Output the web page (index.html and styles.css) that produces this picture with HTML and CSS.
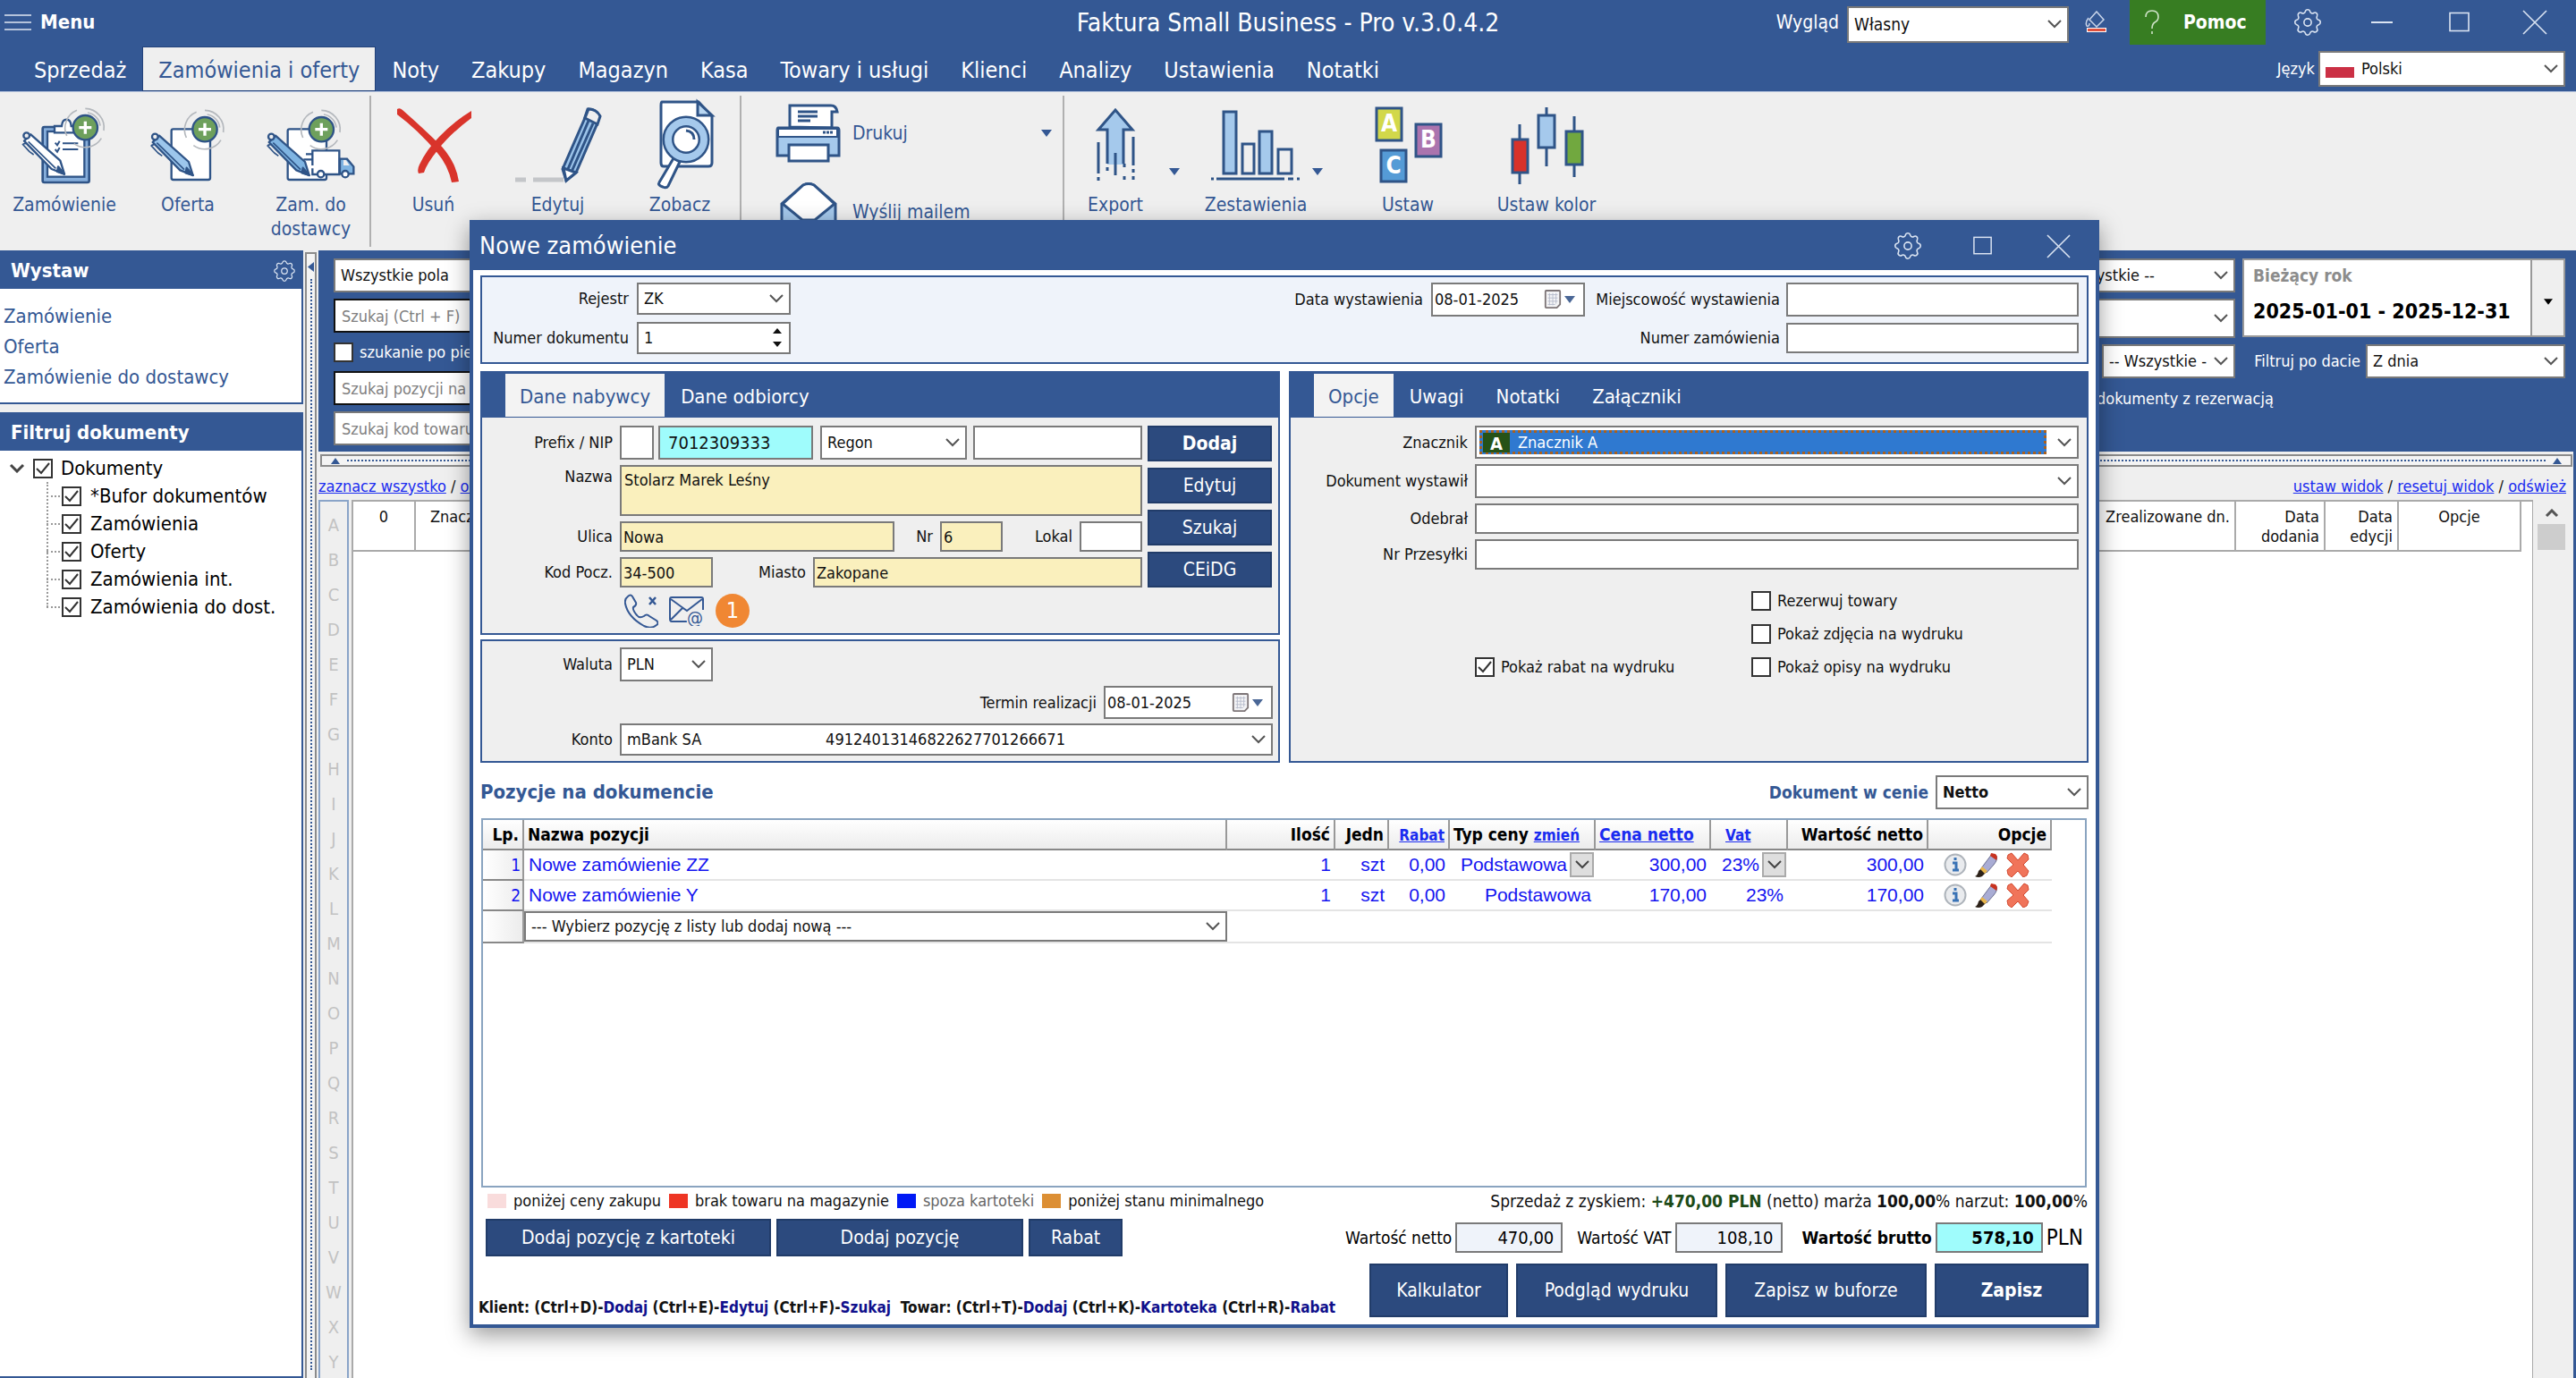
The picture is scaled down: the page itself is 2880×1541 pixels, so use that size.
FILE: index.html
```
<!DOCTYPE html>
<html lang="pl">
<head>
<meta charset="utf-8">
<meta name="viewport" content="width=device-width, initial-scale=1">
<title>Faktura Small Business</title>
<link rel="stylesheet" href="styles.css">
</head>
<body>
<svg class="defs" aria-hidden="true">
  <defs>
    <symbol id="gear" viewBox="0 0 24 24"><path fill="none" stroke="currentColor" stroke-width="1" d="M10.325 4.317c.426-1.756 2.924-1.756 3.35 0a1.724 1.724 0 002.573 1.066c1.543-.94 3.31.826 2.37 2.37a1.724 1.724 0 001.065 2.572c1.756.426 1.756 2.924 0 3.35a1.724 1.724 0 00-1.066 2.573c.94 1.543-.826 3.31-2.37 2.37a1.724 1.724 0 00-2.572 1.065c-.426 1.756-2.924 1.756-3.35 0a1.724 1.724 0 00-2.573-1.066c-1.543.94-3.31-.826-2.37-2.37a1.724 1.724 0 00-1.065-2.572c-1.756-.426-1.756-2.924 0-3.35a1.724 1.724 0 001.066-2.573c-.94-1.543.826-3.31 2.37-2.37.996.608 2.296.07 2.572-1.065z"/><circle cx="12" cy="12" r="2.6" fill="none" stroke="currentColor"/></symbol>
    <symbol id="square" viewBox="0 0 24 24"><rect x="1" y="1.500" width="21" height="20" fill="none" stroke="currentColor" stroke-width="1.600"/></symbol>
    <symbol id="cross" viewBox="0 0 28 28"><path d="M1 1 27 27M27 1 1 27" fill="none" stroke="currentColor" stroke-width="1.600"/></symbol>
    <symbol id="calendar" viewBox="0 0 22 26"><path d="M3 2h16q1 0 1 1v16l-4 4H3q-1 0-1-1V3q0-1 1-1z" fill="#f4f4f6" stroke="#7d7577" stroke-width="2"/><path d="M5 7h12M5 11h12M5 15h12M5 19h9M7 5v15M11 5v15M15 5v13" stroke="#b6bccb" stroke-width="1" fill="none"/></symbol>
    <symbol id="down" viewBox="0 0 12 8"><path d="M0 0h12L6 8z" fill="currentColor"/></symbol>
    <g id="badge">
      <path d="M-62 28A64 64 0 0 1-28-58M0-64A64 64 0 0 1 62 10M54 36A64 64 0 0 1-38 54M8-50A50 50 0 0 1 50-6" fill="none" stroke="#b4b8bd" stroke-width="5"/>
      <circle r="41" fill="#6ea05c" stroke="#2f5487" stroke-width="7"/>
      <path d="M0-21V21M-21 0H21" stroke="#fff" stroke-width="10"/>
    </g>
    <g id="pen" stroke="#2f5487" stroke-width="7" stroke-linejoin="round">
      <path d="M12 18 26 4 125 92 139 137 96 120 4 26z" fill="currentColor"/>
      <circle cx="12" cy="8" r="10" fill="#efefef"/>
      <path d="M18 28 110 118M-2 36 22 62 36 72M0 36l10-2" fill="none" stroke-width="5"/>
      <path d="m118 112 21 25-24-8z" fill="#2f5487"/>
    </g>
    <g id="row-icons">
      <circle cx="13" cy="14" r="11.500" fill="#e9ebee" stroke="#aeb4bb" stroke-width="2"/>
      <path d="M13 6v3M10 12h4v8m-4 0h7" stroke="#3a73b5" stroke-width="3" fill="none"/>
      <path d="M54 2 59 4Q61 8 56 14L48 23 42 18z" fill="#a9acd4" stroke="#6b6f90"/>
      <path d="m53 1 5 1q3 3 1 7l-7-5z" fill="#c8321f"/><path d="m42 18 5 5-4 4q-4 2-8 0 3-1 4-6z" fill="#2c2118"/><path d="m43 16 6 5-3 3-5-5z" fill="#e8b64c"/>
      <path d="m72 3 4-2 7 8 7-8 4 2 1 5-6 6 6 7-2 5-4 2-6-7-7 7-4-3-1-5 7-6-7-7z" fill="#f0745a" stroke="#d2492f" stroke-width="1"/>
    </g>
  </defs>
</svg>

<header class="topbar">
  <div class="topbar-row">
    <button class="menu-button"><svg width="30" height="18" viewBox="0 0 30 18"><path d="M0 1h30M0 9h30M0 17h30" stroke="#dfe6f2" stroke-width="1.600"/></svg>Menu</button>
    <h1>Faktura Small Business - Pro v.3.0.4.2</h1>
    <div class="window-tools">
      <label for="skin">Wygląd</label>
      <select id="skin" class="field skin"><option>Własny</option></select>
      <button class="icon-button bucket" aria-label="Kolor"><svg width="26" height="26" viewBox="0 0 26 26"><path d="m13 1 8 9-8 8-8-8zM4 8q-4 5-2 9 3 1 3-3" fill="none" stroke="#c9d5ea" stroke-width="1.500"/><path d="M2 19h22v5H2z" fill="#fff"/><path d="M3 20h20v3H3z" fill="#e0503c"/></svg></button>
      <button class="help"><svg width="18" height="28" viewBox="0 0 18 28"><path d="M2 8q0-7 7-7t7 7q0 4-4 6-3 2-3 7M9 24v3" fill="none" stroke="#cfe3c8" stroke-width="1.600"/></svg>Pomoc</button>
      <button class="icon-button gear" aria-label="Ustawienia"><svg width="38" height="38"><use href="#gear"/></svg></button>
      <button class="icon-button min" aria-label="Minimalizuj"><svg width="24" height="24"><path d="M0 12h24" stroke="currentColor" stroke-width="2"/></svg></button>
      <button class="icon-button max" aria-label="Maksymalizuj"><svg width="24" height="24"><use href="#square"/></svg></button>
      <button class="icon-button" aria-label="Zamknij"><svg width="28" height="28"><use href="#cross"/></svg></button>
    </div>
  </div>
  <div class="topbar-row">
    <nav class="tabs">
      <a href="#">Sprzedaż</a><a href="#" class="active">Zamówienia i oferty</a><a href="#">Noty</a><a href="#">Zakupy</a><a href="#">Magazyn</a><a href="#">Kasa</a><a href="#">Towary i usługi</a><a href="#">Klienci</a><a href="#">Analizy</a><a href="#">Ustawienia</a><a href="#">Notatki</a>
    </nav>
    <div class="language">
      <label for="lang">Język</label>
      <span class="flagged"><select id="lang" class="field"><option>Polski</option></select><i class="flag"></i></span>
    </div>
  </div>
</header>

<div class="ribbon">
  <div class="group">
    <button class="tool w144"><svg viewBox="80 48 270 270">
      <rect x="142" y="123" width="156" height="186" rx="6" fill="#86aedb" stroke="#2f5487" stroke-width="8"/>
      <rect x="158" y="138" width="124" height="152" fill="#fff" stroke="#2f5487" stroke-width="7"/>
      <path d="M182 142v-22h24q2-22 16-22t16 22h14v22z" fill="#fff" stroke="#2f5487" stroke-width="7"/>
      <path d="m184 176 7 8 8-14m10 8h52M184 198l7 8 8-14m10 6h52" fill="none" stroke="#2f5487" stroke-width="6"/>
      <use href="#pen" x="76" y="144" color="#fff"/>
      <use href="#badge" x="285" y="125"/></svg>Zamówienie</button>
    <button class="tool w132"><svg viewBox="495 48 270 270">
      <rect x="575" y="130" width="130" height="170" rx="6" fill="#fff" stroke="#2f5487" stroke-width="7"/>
      <use href="#pen" x="508" y="148" color="#9cc6ec"/><use href="#badge" x="687" y="131"/></svg>Oferta</button>
    <button class="tool w137"><svg viewBox="909 48 270 270">
      <rect x="965" y="130" width="130" height="170" rx="6" fill="#fff" stroke="#2f5487" stroke-width="7"/>
      <use href="#pen" x="898" y="148" color="#7fb4e2"/>
      <path d="M1026 214h24M1018 232h32M1048 262v20h90v-80h-90v50" fill="#fff" stroke="#2f5487" stroke-width="7"/>
      <path d="M1140 230h24l22 26v24h-46z" fill="#7fb4e2" stroke="#2f5487" stroke-width="7"/><path d="M1152 234v18h20l-12-18z" fill="#efefef"/>
      <circle cx="1076" cy="281" r="11" fill="#fff" stroke="#2f5487" stroke-width="7"/><circle cx="1158" cy="281" r="11" fill="#fff" stroke="#2f5487" stroke-width="7"/>
      <use href="#badge" x="1078" y="131"/></svg>Zam. do dostawcy</button>
  </div>
  <div class="group">
    <button class="tool w139"><svg viewBox="439 116 90 90"><path d="M443 121q3-2 6 1 25 22 44 41 16 18 19 39l-8 1q-4-19-16-33-22-26-45-43z" fill="#d9342b"/><path d="M526 123v8q-24 18-37 35-13 16-16 26l-6 1q-2-4 1-10 8-17 22-31 16-17 36-29z" fill="#d9342b"/></svg>Usuń</button>
    <button class="tool w139"><svg viewBox="578 116 90 90"><path d="M575 200h12M595 200h34" stroke="#c4c6c9" stroke-width="5"/><path d="M656 121q8-1 13 7l-3 11-23 53-11 9-4-13 24-55z" fill="#9cc4ea" stroke="#2f5487" stroke-width="3"/><path d="m653 131 14 7 3-9q-4-8-13-8z" fill="#efefef" stroke="#2f5487" stroke-width="3"/><path d="m629 187 14 5-11 9z" fill="#fff" stroke="#2f5487" stroke-width="3"/><path d="m657 134-23 54M662 137l-24 54" stroke="#2f5487" stroke-width="3"/></svg>Edytuj</button>
    <button class="tool w134"><svg viewBox="715 116 90 90"><path d="M740 113h41l15 16v52q0 4-4 4h-50q-3 0-3-4v-64q0-4 1-4z" fill="#fff" stroke="#2f5487" stroke-width="3"/><path d="M780 113v15h16z" fill="#b9d7f2" stroke="#2f5487" stroke-width="3"/><path d="m753 176 7 4-13 27q-2 3-6 1-6-2-4-5z" fill="#fff" stroke="#2f5487" stroke-width="3"/><circle cx="767" cy="155" r="20" fill="#fff" stroke="#2f5487" stroke-width="13"/><circle cx="767" cy="155" r="20" fill="none" stroke="#a5c9ec" stroke-width="8"/><path d="M767 145q9 1 9 10" fill="none" stroke="#2f5487" stroke-width="3"/></svg>Zobacz</button>
  </div>
  <div class="group wide">
    <button class="line-tool"><svg width="74" height="66" viewBox="865 116 74 66"><path d="M881 142v-24h46q6 0 7 7h-6v18z" fill="#fff" stroke="#2f5487" stroke-width="3"/><path d="M890 125h22M890 130h22M890 135h14" stroke="#2f5487" stroke-width="3"/><path d="M868 143h66q2 0 2 3v28h-69v-28q0-3 1-3z" fill="#a5c9ec" stroke="#2f5487" stroke-width="3"/><path d="M868 144h66v9h-66z" fill="#fff" stroke="#2f5487" stroke-width="2"/><path d="M918 148h12" stroke="#2f5487" stroke-width="3" stroke-dasharray="3 1"/><path d="M880 162h44v18h-44z" fill="#fff" stroke="#2f5487" stroke-width="3"/></svg>Drukuj<svg class="caret" width="12" height="8"><use href="#down"/></svg></button>
    <button class="line-tool"><svg width="74" height="66" viewBox="864 204 74 66"><path d="M871 228 895 207q6-3 12 0l24 21v40h-60z" fill="#a5c9ec" stroke="#2f5487" stroke-width="3"/><path d="M872 228 895 207q6-3 12 0l23 21-22 18h-14z" fill="#fff" stroke="#2f5487" stroke-width="3"/></svg>Wyślij mailem</button>
  </div>
  <div class="group last">
    <button class="tool w112"><svg viewBox="1201 116 90 90"><path d="m1246 122 19 21h-10v40h-18v-40h-10z" fill="#a5c9ec"/><path d="M1237 182v-38h-10l19-22 19 22h-10v38" fill="none" stroke="#2f5487" stroke-width="3"/><path d="M1227 158v35M1246 170v25M1266 152v32" stroke="#2f5487" stroke-width="3"/><path d="M1227 197v4M1237 186v5M1256 196v5M1256 182v8M1266 188v14" stroke="#2f5487" stroke-width="3" stroke-dasharray="4 4"/></svg>Export</button>
    <button class="drop" aria-label="Rozwiń"><svg width="12" height="8"><use href="#down"/></svg></button>
    <button class="tool w118"><svg viewBox="1358 116 90 90"><g fill="#efefef" stroke="#2f5487" stroke-width="3"><path d="M1367 124h14v69h-14zM1407 146h14v47h-14z" fill="#a5c9ec"/><path d="M1388 160h13v33h-13zM1428 166h15v27h-15z"/><path d="M1353 199h3M1359 199h76M1439 199h6M1449 199h3" /></g></svg>Zestawienia</button>
    <button class="drop" aria-label="Rozwiń"><svg width="12" height="8"><use href="#down"/></svg></button>
    <button class="tool w138"><svg viewBox="1528 116 90 90"><g stroke="#2f5487" stroke-width="3"><path d="M1538 120h28v36h-28z" fill="#d2d84a"/><path d="M1582 138h28v36h-28z" fill="#ab74ae"/><path d="M1543 167h28v35h-28z" fill="#559bd6"/></g><g class="letters"><text x="1552" y="146">A</text><text x="1596" y="164">B</text><text x="1557" y="193">C</text></g></svg>Ustaw</button>
    <button class="tool w172"><svg viewBox="1683 116 90 90"><path d="M1698 138v67M1728 119v66M1759 129v68" stroke="#2f5487" stroke-width="3"/><g stroke="#2f5487" stroke-width="3"><path d="M1690 155h17v37h-17z" fill="#d8322b"/><path d="M1719 128h18v36h-18z" fill="#a5c9ec"/><path d="M1750 146h18v37h-18z" fill="#71a83f"/></g></svg>Ustaw kolor</button>
  </div>
</div>

<div class="workspace">
  <aside class="sidebar">
    <section class="side-box">
      <div class="side-head"><h2>Wystaw</h2><button class="icon-button" aria-label="Ustawienia"><svg width="30" height="30"><use href="#gear"/></svg></button></div>
      <ul class="side-links"><li><a href="#">Zamówienie</a></li><li><a href="#">Oferta</a></li><li><a href="#">Zamówienie do dostawcy</a></li></ul>
    </section>
    <section class="side-box grow">
      <div class="side-head"><h2>Filtruj dokumenty</h2></div>
      <div class="tree">
        <div class="node"><svg width="18" height="11" viewBox="0 0 18 11"><path d="m2 2 7 7 7-7" fill="none" stroke="#444" stroke-width="3"/></svg><input type="checkbox" id="t0" checked><label for="t0">Dokumenty</label></div>
        <ul>
          <li class="node"><input type="checkbox" id="t1" checked><label for="t1">*Bufor dokumentów</label></li>
          <li class="node"><input type="checkbox" id="t2" checked><label for="t2">Zamówienia</label></li>
          <li class="node"><input type="checkbox" id="t3" checked><label for="t3">Oferty</label></li>
          <li class="node"><input type="checkbox" id="t4" checked><label for="t4">Zamówienia int.</label></li>
          <li class="node"><input type="checkbox" id="t5" checked><label for="t5">Zamówienia do dost.</label></li>
        </ul>
      </div>
    </section>
  </aside>
  <div class="splitter-v"><svg width="7" height="11" viewBox="0 0 7 11"><path d="M7 0v11L0 5.500z" fill="#345894"/></svg></div>
  <main class="main">
    <div class="search">
      <div class="search-left">
        <select class="field h38" aria-label="Pole"><option>Wszystkie pola</option></select>
        <input class="field h38 dark" placeholder="Szukaj (Ctrl + F)" aria-label="Szukaj">
        <span class="check"><input type="checkbox" id="s1"><label for="s1">szukanie po pierwszych</label></span>
        <input class="field h38 dark" placeholder="Szukaj pozycji na dokumencie" aria-label="Szukaj pozycji">
        <input class="field h38" placeholder="Szukaj kod towaru" aria-label="Szukaj kod">
      </div>
      <div class="search-mid">
        <select class="field h38" aria-label="Filtr 1"><option>-- Wszystkie --</option></select>
        <select class="field h44" aria-label="Filtr 2"><option></option></select>
        <select class="field h38 short" aria-label="Filtr 3"><option>-- Wszystkie --</option></select>
        <span class="reservation">dokumenty z rezerwacją</span>
      </div>
      <div class="search-right">
        <div class="period"><div><b class="muted">Bieżący rok</b><b>2025-01-01 - 2025-12-31</b></div><button aria-label="Okres"><svg width="10" height="7"><use href="#down"/></svg></button></div>
        <div class="by-date"><label for="bydate">Filtruj po dacie</label><select id="bydate" class="field h38"><option>Z dnia</option></select></div>
      </div>
    </div>
    <div class="splitter-h"><svg width="10" height="7" viewBox="0 0 10 7"><path d="M0 7h10L5 0z" fill="#345894"/></svg><i></i><svg width="10" height="7" viewBox="0 0 10 7"><path d="M0 7h10L5 0z" fill="#345894"/></svg></div>
    <div class="link-row"><span><a href="#">zaznacz wszystko</a> / <a href="#">odznacz</a></span><span><a href="#">ustaw widok</a> / <a href="#">resetuj widok</a> / <a href="#">odśwież</a></span></div>
    <div class="documents">
      <div class="letters-bar"><span>A</span><span>B</span><span>C</span><span>D</span><span>E</span><span>F</span><span>G</span><span>H</span><span>I</span><span>J</span><span>K</span><span>L</span><span>M</span><span>N</span><span>O</span><span>P</span><span>Q</span><span>R</span><span>S</span><span>T</span><span>U</span><span>V</span><span>W</span><span>X</span><span>Y</span></div>
      <div class="doc-list">
        <table class="doc-table">
          <colgroup><col class="d1"><col><col class="d3"><col class="d4"><col class="d5"><col class="d6"></colgroup>
          <tr><th class="c">0</th><th class="l">Znacznik</th><th>Zrealizowane dn.</th><th>Data dodania</th><th>Data edycji</th><th class="c">Opcje</th></tr>
        </table>
      </div>
      <div class="scrollbar"><svg width="16" height="10" viewBox="0 0 16 10"><path d="m2 8 6-6 6 6" fill="none" stroke="#555" stroke-width="3"/></svg><i></i></div>
    </div>
  </main>
</div>

<div class="dialog" role="dialog" aria-labelledby="dlg">
  <div class="dialog-head"><h2 id="dlg">Nowe zamówienie</h2>
    <button class="icon-button" aria-label="Ustawienia"><svg width="38" height="38"><use href="#gear"/></svg></button>
    <button class="icon-button" aria-label="Maksymalizuj"><svg width="22" height="22"><use href="#square"/></svg></button>
    <button class="icon-button" aria-label="Zamknij"><svg width="27" height="27"><use href="#cross"/></svg></button>
  </div>
  <div class="dialog-body">
    <section class="panel heading">
      <div class="pair"><label for="rej">Rejestr</label><select id="rej" class="field h36"><option>ZK</option></select>
        <label for="num">Numer dokumentu</label><span class="spin field"><input id="num" value="1"><svg width="10" height="22" viewBox="0 0 10 22"><path d="M5 0 10 6H0zM5 21 0 15h10z" fill="#111"/></svg></span></div>
      <div class="heading-right">
        <div class="date-row"><label for="dat">Data wystawienia</label><span class="date field"><input id="dat" value="08-01-2025"><svg width="20" height="24"><use href="#calendar"/></svg><svg width="12" height="8"><use href="#down"/></svg></span></div>
        <div class="pair city"><label for="city">Miejscowość wystawienia</label><input id="city" class="field h38"><label for="ordn">Numer zamówienia</label><input id="ordn" class="field h34"></div>
      </div>
    </section>

    <div class="columns">
      <div class="left-col">
        <section class="panel tabbed">
          <div class="subtabs"><button class="active">Dane nabywcy</button><button>Dane odbiorcy</button></div>
          <div class="buyer">
            <div class="buyer-fields">
              <div class="row"><label for="pfx">Prefix / NIP</label><input id="pfx" class="field h38 w38"><input class="field h38 nip" value="7012309333" aria-label="NIP"><select class="field h38 regon" aria-label="Rodzaj numeru"><option>Regon</option></select><input class="field h38 fill" aria-label="Regon"></div>
              <div class="row top"><label for="nm">Nazwa</label><textarea id="nm" class="field yellow fill">Stolarz Marek Leśny</textarea></div>
              <div class="row"><label for="st">Ulica</label><input id="st" class="field h34 yellow fill" value="Nowa"><label for="nr" class="w51">Nr</label><input id="nr" class="field h34 yellow w70" value="6"><label for="lok" class="w86">Lokal</label><input id="lok" class="field h34 w70"></div>
              <div class="row"><label for="zip">Kod Pocz.</label><input id="zip" class="field h34 yellow w104" value="34-500"><label for="town" class="w112">Miasto</label><input id="town" class="field h34 yellow fill" value="Zakopane"></div>
              <div class="contact">
                <button class="icon-button" aria-label="Telefon"><svg width="38" height="38" viewBox="0 0 38 38"><g fill="none" stroke="#345894" stroke-width="2"><path d="M4 3q3-3 5 0l4 7q1 3-3 5-1 3 4 9 3 4 8 1 3-3 6 0l8 5q3 3 0 5-6 5-14 1Q4 26 1 11q-1-5 3-8z"/><path d="m28 4 7 8m0-8-7 8" stroke-width="2.500"/></g></svg></button>
                <button class="icon-button" aria-label="E-mail"><svg width="40" height="34" viewBox="0 0 40 34"><g fill="none" stroke="#345894" stroke-width="2"><path d="M38 16V4q0-2-2-2H3Q1 2 1 4v22q0 3 2 3h17"/><path d="m2 4 18 13L37 4M2 27l13-13"/></g><text x="20" y="32" class="at">@</text></svg></button>
                <span class="count">1</span>
              </div>
            </div>
            <div class="buyer-actions"><button class="btn strong">Dodaj</button><button class="btn">Edytuj</button><button class="btn">Szukaj</button><button class="btn">CEiDG</button></div>
          </div>
        </section>
        <section class="panel payment">
          <div class="row"><label for="cur">Waluta</label><select id="cur" class="field h38 w104"><option>PLN</option></select></div>
          <div class="row end"><label for="term" class="auto">Termin realizacji</label><span class="date field wide-date"><input id="term" value="08-01-2025"><svg width="20" height="24"><use href="#calendar"/></svg><svg width="12" height="8"><use href="#down"/></svg></span></div>
          <div class="row"><label for="acc">Konto</label><select id="acc" class="field h36 fill"><option>mBank SA&nbsp;&nbsp;&nbsp;&nbsp;&nbsp;&nbsp;&nbsp;&nbsp;&nbsp;&nbsp;&nbsp;&nbsp;&nbsp;&nbsp;&nbsp;&nbsp;&nbsp;&nbsp;&nbsp;&nbsp;&nbsp;&nbsp;&nbsp;&nbsp;&nbsp;&nbsp;&nbsp;49124013146822627701266671</option></select></div>
        </section>
      </div>

      <section class="panel tabbed">
        <div class="subtabs"><button class="active">Opcje</button><button>Uwagi</button><button>Notatki</button><button>Załączniki</button></div>
        <div class="options">
          <div class="row"><label for="mark">Znacznik</label><span class="field marker"><select id="mark"><option>Znacznik A</option></select><b>A</b></span></div>
          <div class="row"><label for="iss">Dokument wystawił</label><select id="iss" class="field h38 fill"><option></option></select></div>
          <div class="row"><label for="rec">Odebrał</label><input id="rec" class="field h34 fill"></div>
          <div class="row"><label for="ship">Nr Przesyłki</label><input id="ship" class="field h34 fill"></div>
        </div>
        <div class="checks">
          <span class="check second"><input type="checkbox" id="k1"><label for="k1">Rezerwuj towary</label></span>
          <span class="check second"><input type="checkbox" id="k2"><label for="k2">Pokaż zdjęcia na wydruku</label></span>
          <span class="check"><input type="checkbox" id="k3" checked><label for="k3">Pokaż rabat na wydruku</label></span>
          <span class="check"><input type="checkbox" id="k4"><label for="k4">Pokaż opisy na wydruku</label></span>
        </div>
      </section>
    </div>

    <div class="items-head"><h3>Pozycje na dokumencie</h3><label for="price">Dokument w cenie</label><select id="price" class="field h38 price"><option>Netto</option></select></div>
    <div class="items">
      <table>
        <colgroup><col class="i1"><col class="i2"><col class="i3"><col class="i4"><col class="i5"><col class="i6"><col class="i7"><col class="i8"><col class="i9"><col class="i10"></colgroup>
        <thead><tr><th>Lp.</th><th class="l">Nazwa pozycji</th><th>Ilość</th><th>Jedn</th><th><a href="#" class="small">Rabat</a></th><th class="l">Typ ceny <a href="#" class="small">zmień</a></th><th class="l"><a href="#">Cena netto</a></th><th class="l pad"><a href="#" class="small">Vat</a></th><th>Wartość netto</th><th>Opcje</th></tr></thead>
        <tbody>
          <tr><th>1</th><td class="l">Nowe zamówienie ZZ</td><td>1</td><td>szt</td><td>0,00</td><td class="pick"><span>Podstawowa<button aria-label="Wybierz"></button></span></td><td>300,00</td><td class="pick"><span>23%<button aria-label="Wybierz"></button></span></td><td>300,00</td><td class="acts"><svg width="96" height="28" role="img" aria-label="Opcje"><use href="#row-icons"/></svg></td></tr>
          <tr><th>2</th><td class="l">Nowe zamówienie Y</td><td>1</td><td>szt</td><td>0,00</td><td>Podstawowa</td><td>170,00</td><td>23%</td><td>170,00</td><td class="acts"><svg width="96" height="28" role="img" aria-label="Opcje"><use href="#row-icons"/></svg></td></tr>
          <tr><th></th><td class="new"><select class="field" aria-label="Nowa pozycja"><option>--- Wybierz pozycję z listy lub dodaj nową ---</option></select></td><td colspan="8"></td></tr>
        </tbody>
      </table>
    </div>

    <div class="legend">
      <ul><li><i class="pink"></i>poniżej ceny zakupu</li><li><i class="red"></i>brak towaru na magazynie</li><li class="gray"><i class="blue"></i>spoza kartoteki</li><li><i class="orange"></i>poniżej stanu minimalnego</li></ul>
      <p>Sprzedaż z zyskiem: <b class="profit">+470,00 PLN</b> (netto) marża <b>100,00</b>% narzut: <b>100,00</b>%</p>
    </div>
    <div class="totals">
      <div class="item-buttons"><button class="btn b1">Dodaj pozycję z kartoteki</button><button class="btn b2">Dodaj pozycję</button><button class="btn b3">Rabat</button></div>
      <div class="sums"><label for="net">Wartość netto</label><input id="net" class="field sum" value="470,00"><label for="vat" class="gap-s">Wartość VAT</label><input id="vat" class="field sum" value="108,10"><label for="gross" class="gap-m strong">Wartość brutto</label><input id="gross" class="field sum gross" value="578,10"><span class="unit">PLN</span></div>
    </div>
    <div class="footer">
      <p>Klient: (Ctrl+D)-<em>Dodaj</em> (Ctrl+E)-<em>Edytuj</em> (Ctrl+F)-<em>Szukaj</em> &nbsp;Towar: (Ctrl+T)-<em>Dodaj</em> (Ctrl+K)-<em>Kartoteka</em> (Ctrl+R)-<em>Rabat</em></p>
      <button class="btn f1">Kalkulator</button><button class="btn f2">Podgląd wydruku</button><button class="btn f2">Zapisz w buforze</button><button class="btn f3 strong">Zapisz</button>
    </div>
  </div>
</div>
</body>
</html>
```
FILE: styles.css
```
:root {
  --blue: #345894;
  --btn: #2c4a7e;
  --link: #1a2cf0;
  --face: #efefef;
  --line: #7a7a7a;
}

* { box-sizing: border-box; }

body {
  margin: 0;
  height: 100vh;
  display: flex;
  flex-direction: column;
  overflow: hidden;
  position: relative;
  background: var(--face);
  color: #111;
  font: 18px/22px "DejaVu Sans Condensed", "DejaVu Sans", sans-serif;
}

button, input, select, textarea { font: inherit; color: inherit; margin: 0; }
button { border: 0; background: none; padding: 0; }
h1, h2, h3, p, ul { margin: 0; padding: 0; }
ul { list-style: none; }
a { color: var(--link); }
svg { flex: none; }
.defs { position: absolute; width: 0; height: 0; }

/* shared fields */
.field {
  border: 2px solid var(--line);
  background-color: #fff;
  border-radius: 0;
  padding: 0 8px 0 4px;
  min-width: 0;
  height: 34px;
  outline: 0;
}
select.field, .marker {
  appearance: none;
  padding: 0 30px 0 6px;
  background-image: url("data:image/svg+xml,%3Csvg xmlns='http://www.w3.org/2000/svg' width='16' height='10'%3E%3Cpath d='M1 1l7 7 7-7' fill='none' stroke='%23555' stroke-width='2'/%3E%3C/svg%3E");
  background-repeat: no-repeat;
  background-position: right 6px center;
}
.h34 { height: 34px; }
.h36 { height: 36px; }
.h38 { height: 38px; }
.h44 { height: 44px; }
.fill { flex: 1; width: 0; }
.dark { border-color: #111; }
.yellow { background-color: #faf0bd; }
::placeholder { color: #808080; opacity: 1; }

input[type="checkbox"] {
  appearance: none;
  flex: none;
  width: 22px;
  height: 22px;
  border: 2px solid #333;
  background: #fff no-repeat center;
}
input[type="checkbox"]:checked {
  background-image: url("data:image/svg+xml,%3Csvg xmlns='http://www.w3.org/2000/svg' width='18' height='16'%3E%3Cpath d='M2 8l5 5 9-11' fill='none' stroke='%23333' stroke-width='2'/%3E%3C/svg%3E");
}
.check { display: flex; align-items: center; gap: 7px; }

.icon-button { color: #dbe4f2; display: flex; align-items: center; justify-content: center; }

.btn {
  background: var(--btn);
  border: 2px solid #213c69;
  color: #fff;
  font-size: 21px;
  height: 40px;
}
.strong { font-weight: bold; }

/* title bar */
.topbar { background: var(--blue); color: #fff; border-bottom: 1px solid #b5c3dc; }
.topbar-row { display: flex; justify-content: space-between; }
.topbar-row:first-child { display: grid; grid-template-columns: 1fr auto 1fr; height: 52px; }
.menu-button { display: flex; align-items: center; gap: 10px; padding-left: 5px; font-weight: bold; font-size: 22px; height: 50px; }
h1 { font-weight: normal; font-size: 28px; line-height: 52px; }
.window-tools { display: flex; align-items: center; justify-content: flex-end; height: 50px; padding-right: 32px; font-size: 21px; }
.skin { width: 248px; height: 41px; margin: 4px 18px 0 9px; font-size: 19px; color: #111; }
.help { display: flex; align-items: center; gap: 26px; align-self: stretch; width: 152px; margin-left: 24px; padding-left: 16px; background: #377d22; font-weight: bold; font-size: 21px; }
.gear { margin: 0 52px 0 28px; }
.min { margin-right: 63px; }
.max { margin-right: 58px; }
.tabs { display: flex; padding-left: 20px; }
.tabs a { color: #fff; text-decoration: none; font-size: 25px; line-height: 44px; padding: 4px 17px 0; border: 1px solid transparent; }
.tabs .active { background: var(--face); color: var(--blue); border-color: #23427a; }
.language { display: flex; align-items: center; gap: 4px; padding-right: 12px; }
.flagged { position: relative; }
.flagged select { width: 276px; height: 40px; padding-left: 46px; color: #111; }
.flag { position: absolute; left: 8px; top: 10px; width: 32px; height: 20px; background: linear-gradient(#fff 40%, #cb3045 40%); }

/* ribbon */
.ribbon { display: flex; height: 177px; color: var(--blue); font-size: 21px; line-height: 27px; padding-top: 4px; }
.group { display: flex; align-items: flex-start; height: 169px; border-right: 2px solid #b0b0b0; overflow: visible; }
.group.last { border: 0; padding-left: 1px; }
.tool { display: flex; flex-direction: column; align-items: center; padding: 10px 16px 0; }
.tool svg { width: 90px; height: 90px; overflow: visible; margin-bottom: 9px; }
.w112 { width: 112px; } .w118 { width: 118px; } .w132 { width: 132px; } .w134 { width: 134px; }
.w137 { width: 137px; } .w138 { width: 138px; } .w139 { width: 139px; } .w144 { width: 144px; } .w172 { width: 172px; }
.tool.w118, .tool.w112, .tool.w144 { padding-left: 0; padding-right: 0; }
.tool.w137 { padding-left: 20px; padding-right: 14px; }
.letters { fill: #fff; font: bold 26px "DejaVu Sans Condensed", sans-serif; text-anchor: middle; }
.wide { flex-direction: column; width: 361px; gap: 22px; padding: 9px 12px 0 38px; overflow: hidden; }
.line-tool { display: flex; align-items: center; gap: 12px; width: 100%; }
.caret { margin-left: auto; }
.drop { width: 20px; margin: 81px 22px 0 0; display: flex; justify-content: center; }

/* sidebar */
.workspace { flex: 1; display: flex; min-height: 0; border-right: 3px solid var(--blue); }
.sidebar { width: 339px; display: flex; flex-direction: column; gap: 9px; }
.side-box { border-right: 2px solid var(--blue); border-bottom: 2px solid var(--blue); background: #fff; }
.side-box.grow { flex: 1; }
.side-head { display: flex; justify-content: space-between; align-items: center; background: var(--blue); color: #fff; height: 43px; padding: 2px 4px 0 12px; }
.side-head h2 { font-size: 22px; }
.side-links { padding: 14px 4px 0; font-size: 22px; line-height: 34px; height: 127px; }
.side-links a { color: var(--blue); text-decoration: none; }
.tree { font-size: 22px; padding-top: 4px; color: #000; }
.node { display: flex; align-items: center; height: 31px; gap: 10px; }
.tree > .node { padding-left: 10px; gap: 9px; }
.tree ul { margin-left: 52px; position: relative; }
.tree ul::before { content: ""; position: absolute; top: 0; bottom: 15px; border-left: 2px dotted #999; }
.tree li::before { content: ""; width: 15px; border-top: 2px dotted #999; margin-right: -8px; }
.splitter-v { width: 13px; margin: 2px 2px 0 2px; border: 2px solid #8b8b8b; border-bottom: 0; background: #f4f4f4; padding: 9px 1px; display: flex; flex-direction: column; gap: 8px; align-items: center; }
.splitter-v::after { content: ""; flex: 1; border-left: 2px dotted var(--blue); }

/* search area */
.main { flex: 1; display: flex; flex-direction: column; min-width: 0; }
.search { display: flex; background: var(--blue); color: #fff; height: 225px; padding: 9px 9px 0 17px; gap: 8px; }
.search .field { color: #111; }
.search-left { width: 400px; display: flex; flex-direction: column; gap: 7px; }
.search-left input.field { padding-left: 7px; }
.search-left .check { height: 26px; margin: 2px 0 1px; }
.search-mid { width: 300px; margin-left: auto; display: flex; flex-direction: column; gap: 7px; }
.search-mid .short { width: 149px; align-self: flex-end; }
.search-mid .h38:first-child { padding-left: 93px; }
.reservation { padding: 5px 0 0 145px; white-space: nowrap; }
.search-right { width: 361px; display: flex; flex-direction: column; gap: 8px; }
.period { display: flex; height: 88px; border: 2px solid #999; background: #fff; color: #000; font-size: 23px; }
.period div { flex: 1; display: flex; flex-direction: column; gap: 16px; padding: 5px 10px; line-height: 24px; white-space: nowrap; }
.period .muted { color: #8c8c8c; font-size: 19px; }
.period button { width: 37px; background: var(--face); border-left: 2px solid #999; }
.by-date { display: flex; align-items: center; justify-content: flex-end; gap: 6px; }
.by-date .field { width: 223px; }
.splitter-h { display: flex; align-items: center; gap: 8px; height: 14px; margin: 3px 1px 0 2px; padding: 0 10px; border: 2px solid #8b8b8b; background: #f4f4f4; }
.splitter-h i { flex: 1; border-top: 2px dotted var(--blue); }
.link-row { display: flex; justify-content: space-between; padding: 11px 8px 4px 0; height: 37px; }

/* document list */
.documents { flex: 1; display: flex; min-height: 0; }
.letters-bar { width: 34px; border: 2px solid #8aa4c8; border-bottom: 0; overflow: hidden; color: #c2c2c2; font-size: 20px; display: flex; flex-direction: column; align-items: center; padding-top: 7px; }
.letters-bar span { flex: none; height: 39px; line-height: 39px; }
.doc-list { flex: 1; margin-left: 3px; background: #fff; border: 2px solid #aaa; border-width: 2px 1px 0 2px; }
.doc-table { width: calc(100% - 12px); table-layout: fixed; border-collapse: collapse; }
.doc-table th { font-weight: normal; text-align: right; vertical-align: top; padding: 6px 5px 0; height: 55px; border-right: 2px solid #aaa; border-bottom: 2px solid #aaa; }
.doc-table .c { text-align: center; }
.doc-table .l { text-align: left; padding-left: 16px; }
.d1 { width: 69px; } .d3 { width: 240px; } .d4 { width: 100px; } .d5 { width: 82px; } .d6 { width: 137px; }
.scrollbar { width: 45px; padding: 10px 9px 0 5px; display: flex; flex-direction: column; align-items: center; gap: 7px; }
.scrollbar i { width: 100%; height: 29px; background: #cdcdcd; }

/* dialog window */
.dialog { position: absolute; top: 246px; left: 525px; right: 533px; background: #fff; border: 4px solid var(--blue); border-top: 0; box-shadow: 0 8px 24px rgba(0, 0, 0, .4); }
.dialog-head { display: flex; align-items: center; height: 56px; background: var(--blue); color: #fff; padding: 2px 0 0 7px; }
.dialog-head h2 { flex: 1; font-weight: normal; font-size: 27px; line-height: 54px; }
.dialog-head button { width: 84px; }
.dialog-body { padding: 6px 8px 8px; }
.panel { border: 2px solid var(--blue); background: var(--face); }
.heading { display: flex; justify-content: space-between; background: #eff3fa; height: 99px; padding: 6px 9px 6px 0; }
.pair { display: grid; grid-template-columns: 164px 172px; column-gap: 9px; row-gap: 8px; align-content: start; }
.pair label { text-align: right; align-self: center; }
.heading-right { display: flex; align-items: flex-start; gap: 8px; }
.date-row { display: flex; align-items: center; gap: 9px; }
.date, .spin { display: flex; align-items: center; height: 38px; width: 172px; padding: 0 9px 0 2px; gap: 3px; color: #4a6796; }
.spin { height: 36px; padding: 0 8px 0 6px; }
.date input, .spin input { flex: 1; min-width: 0; width: 0; border: 0; padding: 0; background: none; color: #111; outline: 0; }
.pair.city { grid-template-columns: 210px 327px; row-gap: 7px; column-gap: 7px; }
.columns { display: grid; grid-template-columns: minmax(0, 1fr) minmax(0, 1fr); gap: 10px; margin-top: 8px; }
.left-col { display: flex; flex-direction: column; gap: 5px; }
.subtabs { display: flex; background: var(--blue); height: 50px; padding: 1px 0 1px 26px; }
.subtabs button { color: #fff; font-size: 22px; padding: 3px 18px 0; }
.subtabs .active { background: #f3f3f3; color: var(--blue); padding: 3px 16px 0; }
.buyer { display: flex; gap: 6px; padding: 9px 7px 5px 0; }
.buyer-fields { flex: 1; min-width: 0; display: flex; flex-direction: column; gap: 6px; }
.buyer-actions { width: 139px; display: flex; flex-direction: column; gap: 7px; }
.buyer-fields .field.nip { width: 173px; margin: 0 8px 0 5px; background: #9ffcfc; font-size: 20px; padding-left: 9px; }
.regon { width: 164px; margin-right: 7px; }
.row { display: flex; align-items: center; }
.row label { flex: none; width: 154px; padding-right: 8px; text-align: right; }
.row.top { align-items: flex-start; }
.row.top label { padding-top: 2px; }
textarea.field { height: 57px; resize: none; padding: 4px 3px; overflow: hidden; }
.w38 { width: 38px; } .w70 { width: 70px; } .w104 { width: 104px; }
.row .w51 { width: 51px; } .row .w86 { width: 86px; } .row .w112 { width: 112px; } .row .auto { width: auto; }
.row input.field { padding-left: 2px; }
.contact { display: flex; align-items: center; gap: 12px; padding-left: 159px; height: 40px; }
.at { font: 20px "DejaVu Sans Condensed", sans-serif; fill: var(--blue); stroke: var(--face); stroke-width: 3px; paint-order: stroke; }
.count { width: 38px; height: 38px; border-radius: 50%; background: #f08733; color: #fff; font-size: 25px; line-height: 38px; text-align: center; }
.payment { height: 138px; padding: 7px 6px 0 0; display: flex; flex-direction: column; gap: 5px; }
.row.end { justify-content: flex-end; }
.wide-date { width: 189px; height: 37px; }
.options { display: flex; flex-direction: column; gap: 6px; padding: 9px 9px 0 0; }
.options .row label { width: 206px; }
.marker { flex: 1; height: 37px; position: relative; padding: 3px 34px 3px 3px; display: flex; }
.marker select { appearance: none; flex: 1; background: #2f79d0; color: #fff; border: 3px dotted #a8601f; border-radius: 0; padding: 0 0 0 40px; outline: 0; }
.marker b { position: absolute; left: 7px; top: 6px; width: 30px; height: 22px; background: #265217; color: #fff; text-align: center; font-size: 20px; line-height: 24px; }
.checks { display: grid; grid-template-columns: 309px 1fr; row-gap: 15px; padding: 24px 0 0 206px; }
.checks .second { grid-column: 2; }

/* items */
.items-head { display: flex; align-items: center; height: 38px; margin-top: 14px; color: var(--blue); font-weight: bold; }
.items-head h3 { flex: 1; font-size: 22px; }
.items-head label { font-size: 19px; padding-right: 8px; }
.price { width: 171px; color: #111; }
.items { min-height: 413px; margin: 10px 2px 0 1px; border: 2px solid #8aa4c0; }
.items table { width: calc(100% - 37px); table-layout: fixed; border-collapse: separate; border-spacing: 0; color: #1414f0; font-family: "Liberation Sans", Arial, sans-serif; font-size: 21px; }
.items th, .items td { height: 34px; padding: 0 5px; text-align: right; white-space: nowrap; border-bottom: 2px solid #e4e4e4; line-height: 24px; }
.items thead th { color: #000; font: bold 19px/24px "DejaVu Sans Condensed", sans-serif; background: linear-gradient(#fff, #ececec); border-right: 2px solid #999; border-bottom-color: #888; padding: 0 4px; }
.items tbody th { font: 19px/24px "DejaVu Sans Condensed", sans-serif; background: linear-gradient(90deg, #fff, #ececec); border-right: 2px solid #999; border-bottom-color: #888; padding: 0 2px; }
.items .l { text-align: left; }
.items thead .pad { padding-left: 16px; }
.items .small { font-size: 17px; }
.i1 { width: 46px; } .i3 { width: 121px; } .i4 { width: 60px; } .i5 { width: 68px; } .i6 { width: 163px; }
.i7 { width: 129px; } .i8 { width: 86px; } .i9 { width: 157px; } .i10 { width: 138px; }
.items .pick { padding: 0 2px 0 0; }
.pick span { display: flex; justify-content: flex-end; align-items: center; gap: 3px; }
.pick button { width: 27px; height: 28px; border: 2px solid #aaa; background: #dedede url("data:image/svg+xml,%3Csvg xmlns='http://www.w3.org/2000/svg' width='16' height='10'%3E%3Cpath d='M1 1l7 7 7-7' fill='none' stroke='%23444' stroke-width='2'/%3E%3C/svg%3E") no-repeat center; }
.items .acts { text-align: left; padding: 0 0 0 17px; }
.acts svg { display: block; }
.items .new { padding: 0; }
.new .field { display: block; width: 100%; height: 34px; color: #111; font-family: "DejaVu Sans Condensed", sans-serif; font-size: 18px; }

.legend { display: flex; justify-content: space-between; height: 35px; padding: 4px 1px 0 8px; }
.legend ul { display: flex; gap: 9px; }
.legend li { display: flex; gap: 8px; }
.legend i { width: 21px; height: 16px; margin-top: 3px; }
.legend p { font-size: 19px; }
.gray { color: #666; }
.pink { background: #f9dcdc; } .red { background: #ee3524; } .blue { background: #0019f5; } .orange { background: #dc8f34; }
.profit { color: #1c4a17; }
.totals { display: flex; justify-content: space-between; padding: 0 6px; height: 50px; }
.item-buttons { display: flex; gap: 6px; }
.item-buttons .btn { height: 42px; }
.b1 { width: 319px; } .b2 { width: 276px; } .b3 { width: 105px; }
.sums { display: flex; align-items: center; height: 42px; gap: 4px; color: #000; font-size: 19px; }
.sum { width: 120px; height: 34px; text-align: right; background: #eff3fa; font-size: 20px; }
.gross { background: #9ffcfc; font-weight: bold; }
.gap-s { margin-left: 12px; } .gap-m { margin-left: 18px; }
.unit { font-size: 24px; }
.footer { display: flex; align-items: flex-end; gap: 9px; }
.footer p { flex: 1; font-weight: bold; font-size: 17px; white-space: nowrap; margin-left: -2px; }
.footer em { font-style: normal; color: #10108c; }
.footer .btn { height: 60px; flex: none; }
.f1 { width: 155px; } .f2 { width: 225px; } .f3 { width: 172px; }
```
